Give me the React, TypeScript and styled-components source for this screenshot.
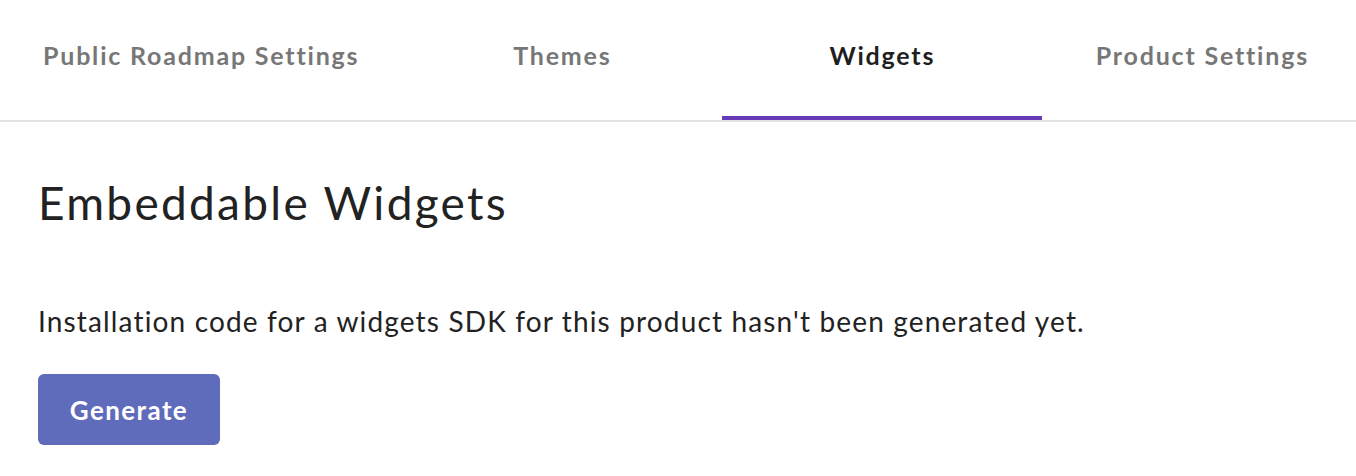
import React, { useState } from "react";
import styled, { createGlobalStyle } from "styled-components";

const Global = createGlobalStyle`
  html, body { margin: 0; padding: 0; background: #ffffff; }
  body { font-family: Lato, "Open Sans", "Liberation Sans", sans-serif; color: #212121; overflow: hidden; }
  * { box-sizing: border-box; }
`;

const Page = styled.div`
  width: 1356px;
  height: 476px;
  overflow: hidden;
  background: #fff;
`;

const TabBar = styled.nav`
  display: flex;
  height: 122px;
  border-bottom: 2px solid #e2e2e2;
`;

const Tab = styled.button<{ $active?: boolean }>`
  flex-shrink: 0;
  min-width: 320px;
  height: 120px;
  padding: 0 43px 6px;
  display: flex;
  align-items: center;
  justify-content: center;
  background: none;
  border: none;
  border-bottom: 4px solid ${(p) => (p.$active ? "#673ab7" : "transparent")};
  font-family: inherit;
  font-size: 25px;
  font-weight: 700;
  letter-spacing: 1.8px;
  color: ${(p) => (p.$active ? "#1f1f1f" : "#777777")};
  white-space: nowrap;
  cursor: pointer;
`;

const Content = styled.main`
  padding: 0 38px;
  display: flex;
  flex-direction: column;
  align-items: flex-start;
`;

const Title = styled.h1`
  margin: 53px 0 0;
  font-size: 46px;
  font-weight: 400;
  letter-spacing: 2.3px;
  line-height: 56px;
  color: #222;
`;

const Text = styled.p`
  margin: 72px 0 0;
  font-size: 28px;
  letter-spacing: 1.15px;
  line-height: 36px;
  color: #222;
`;

const Button = styled.button`
  margin-top: 35px;
  width: 182px;
  height: 71px;
  border: none;
  border-radius: 6px;
  background: #5f6bbb;
  color: #fff;
  font-family: inherit;
  font-size: 26px;
  font-weight: 700;
  letter-spacing: 1.4px;
  cursor: pointer;
`;

const tabs = ["Public Roadmap Settings", "Themes", "Widgets", "Product Settings"];

export default function App() {
  const [active, setActive] = useState(2);
  return (
    <Page>
      <Global />
      <TabBar>
        {tabs.map((t, i) => (
          <Tab key={t} $active={i === active} onClick={() => setActive(i)}>
            {t}
          </Tab>
        ))}
      </TabBar>
      <Content>
        <Title>Embeddable Widgets</Title>
        <Text>Installation code for a widgets SDK for this product hasn't been generated yet.</Text>
        <Button>Generate</Button>
      </Content>
    </Page>
  );
}
